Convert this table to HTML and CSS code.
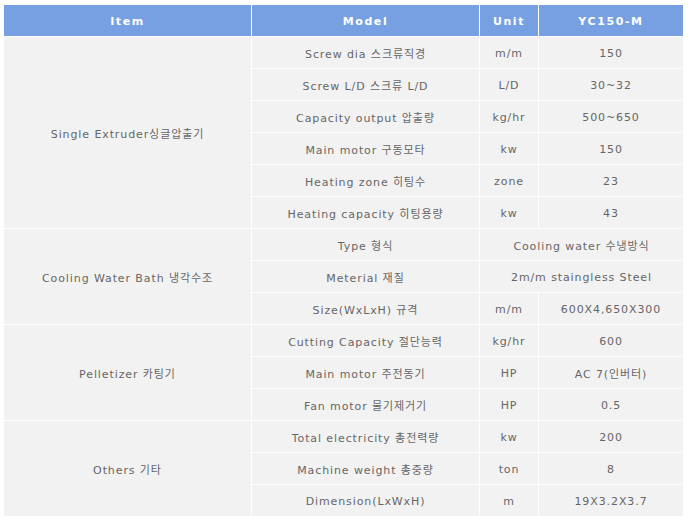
FILE: index.html
```html
<!DOCTYPE html>
<html lang="ko">
<head>
<meta charset="utf-8">
<title>YC150-M Spec</title>
<link rel="stylesheet" href="styles.css">
</head>
<body>
<table class="spec">
  <colgroup>
    <col class="c1"><col class="c2"><col class="c3"><col class="c4">
  </colgroup>
  <thead>
    <tr><th>Item</th><th>Model</th><th>Unit</th><th>YC150-M</th></tr>
  </thead>
  <tbody>
    <tr><td rowspan="6">Single Extruder싱글압출기</td><td>Screw dia 스크류직경</td><td>m/m</td><td>150</td></tr>
    <tr><td>Screw L/D 스크류 L/D</td><td>L/D</td><td>30~32</td></tr>
    <tr><td>Capacity output 압출량</td><td>kg/hr</td><td>500~650</td></tr>
    <tr><td>Main motor 구동모타</td><td>kw</td><td>150</td></tr>
    <tr><td>Heating zone 히팅수</td><td>zone</td><td>23</td></tr>
    <tr><td>Heating capacity 히팅용량</td><td>kw</td><td>43</td></tr>
    <tr><td rowspan="3">Cooling Water Bath 냉각수조</td><td>Type 형식</td><td colspan="2">Cooling water 수냉방식</td></tr>
    <tr><td>Meterial 재질</td><td colspan="2">2m/m staingless Steel</td></tr>
    <tr><td>Size(WxLxH) 규격</td><td>m/m</td><td>600X4,650X300</td></tr>
    <tr><td rowspan="3">Pelletizer 카팅기</td><td>Cutting Capacity 절단능력</td><td>kg/hr</td><td>600</td></tr>
    <tr><td>Main motor 주전동기</td><td>HP</td><td>AC 7(인버터)</td></tr>
    <tr><td>Fan motor 물기제거기</td><td>HP</td><td>0.5</td></tr>
    <tr><td rowspan="3">Others 기타</td><td>Total electricity 총전력량</td><td>kw</td><td>200</td></tr>
    <tr><td>Machine weight 총중량</td><td>ton</td><td>8</td></tr>
    <tr><td>Dimension(LxWxH)</td><td>m</td><td>19X3.2X3.7</td></tr>
  </tbody>
</table>
</body>
</html>
```
FILE: styles.css
```css
html, body {
  margin: 0;
  padding: 0;
  background: #ffffff;
}
body {
  padding: 4px 0 0 3px;
  font-family: "DejaVu Sans", "Noto Sans CJK KR", sans-serif;
}
.spec {
  border-collapse: separate;
  border-spacing: 1px;
  background: #ffffff;
  table-layout: fixed;
  width: 681px;
}
.c1 { width: 247px; }
.c2 { width: 227px; }
.c3 { width: 58px; }
.c4 { width: 144px; }
.spec th,
.spec td {
  height: 31px;
  padding: 1px 0 0;
  text-align: center;
  vertical-align: middle;
  box-sizing: border-box;
  white-space: nowrap;
}
.spec th {
  background: #77a0e3;
  color: #ffffff;
  font-size: 11px;
  font-weight: bold;
  letter-spacing: 1.6px;
}
.spec td {
  background: #f2f2f2;
  color: #666666;
  font-size: 11px;
  letter-spacing: 0.9px;
}
```
